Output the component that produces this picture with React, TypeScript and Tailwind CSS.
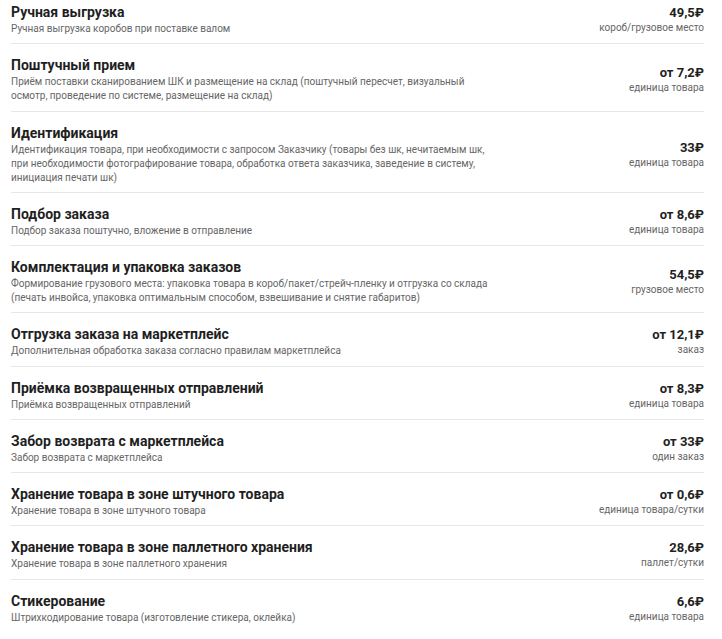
type Service = {
  title: string;
  desc: string;
  price: string;
  unit: string;
};

const services: Service[] = [
  {
    title: "Ручная выгрузка",
    desc: "Ручная выгрузка коробов при поставке валом",
    price: "49,5₽",
    unit: "короб/грузовое место",
  },
  {
    title: "Поштучный прием",
    desc: "Приём поставки сканированием ШК и размещение на склад (поштучный пересчет, визуальный осмотр, проведение по системе, размещение на склад)",
    price: "от 7,2₽",
    unit: "единица товара",
  },
  {
    title: "Идентификация",
    desc: "Идентификация товара, при необходимости с запросом Заказчику (товары без шк, нечитаемым шк, при необходимости фотографирование товара, обработка ответа заказчика, заведение в систему, инициация печати шк)",
    price: "33₽",
    unit: "единица товара",
  },
  {
    title: "Подбор заказа",
    desc: "Подбор заказа поштучно, вложение в отправление",
    price: "от 8,6₽",
    unit: "единица товара",
  },
  {
    title: "Комплектация и упаковка заказов",
    desc: "Формирование грузового места: упаковка товара в короб/пакет/стрейч-пленку и отгрузка со склада (печать инвойса, упаковка оптимальным способом, взвешивание и снятие габаритов)",
    price: "54,5₽",
    unit: "грузовое место",
  },
  {
    title: "Отгрузка заказа на маркетплейс",
    desc: "Дополнительная обработка заказа согласно правилам маркетплейса",
    price: "от 12,1₽",
    unit: "заказ",
  },
  {
    title: "Приёмка возвращенных отправлений",
    desc: "Приёмка возвращенных отправлений",
    price: "от 8,3₽",
    unit: "единица товара",
  },
  {
    title: "Забор возврата с маркетплейса",
    desc: "Забор возврата с маркетплейса",
    price: "от 33₽",
    unit: "один заказ",
  },
  {
    title: "Хранение товара в зоне штучного товара",
    desc: "Хранение товара в зоне штучного товара",
    price: "от 0,6₽",
    unit: "единица товара/сутки",
  },
  {
    title: "Хранение товара в зоне паллетного хранения",
    desc: "Хранение товара в зоне паллетного хранения",
    price: "28,6₽",
    unit: "паллет/сутки",
  },
  {
    title: "Стикерование",
    desc: "Штрихкодирование товара (изготовление стикера, оклейка)",
    price: "6,6₽",
    unit: "единица товара",
  },
];

function ServiceRow({ item, first }: { item: Service; first: boolean }) {
  return (
    <div
      className={
        first
          ? "flex items-center justify-between gap-4 pt-[3px] pb-[7.25px] border-b border-[#e6e6e6] last:border-b-0"
          : "flex items-center justify-between gap-4 pt-[12px] pb-[7.25px] border-b border-[#e6e6e6] last:border-b-0"
      }
    >
      <div className="w-[484px]">
        <div className="text-[14px] leading-[19px] font-bold text-[#1f1f1f]">
          {item.title}
        </div>
        <p className="text-[10px] leading-[14px] text-[#666]">{item.desc}</p>
      </div>
      <div className="flex flex-col items-end text-right">
        <div className="text-[13px] leading-[17px] font-bold text-[#1f1f1f]">
          {item.price}
        </div>
        <div className="text-[10px] leading-[14px] text-[#666]">{item.unit}</div>
      </div>
    </div>
  );
}

export default function App() {
  return (
    <div
      className="min-h-screen bg-white pl-[11px]"
      style={{ fontFamily: "Roboto, 'Noto Sans', sans-serif" }}
    >
      <div className="w-[693px]">
        {services.map((s, i) => (
          <ServiceRow key={s.title} item={s} first={i === 0} />
        ))}
      </div>
    </div>
  );
}
